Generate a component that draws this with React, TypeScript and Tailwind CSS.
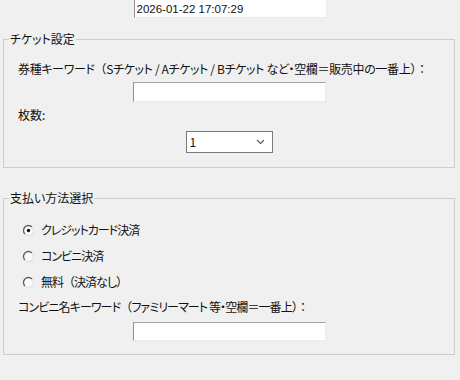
import React from 'react';

const font = "font-['Noto_Sans_CJK_JP','Noto_Sans',sans-serif] [font-feature-settings:'palt']";

// full-width punctuation keeps its full width like Meiryo UI
function W({ children }: { children: React.ReactNode }) {
  return <span className="[font-feature-settings:normal]">{children}</span>;
}

function TextBox({ value = '', className = '' }: { value?: string; className?: string }) {
  return (
    <div
      className={`mx-auto w-[193px] bg-white border-t border-l border-t-[#a3a3a3] border-l-[#8f8f8f] border-r border-b border-r-[#ececec] border-b-[#ececec] pl-[2px] leading-[18px] ${className}`}
    >
      {value}
    </div>
  );
}

function Radio({ checked }: { checked?: boolean }) {
  return (
    <svg width="13" height="13" viewBox="0 0 13 13" className="shrink-0">
      <circle cx="6.5" cy="6.5" r="5" fill="#fbfbfb" />
      <path d="M2.96 10.04 A5 5 0 0 1 10.04 2.96" fill="none" stroke="#5e5e5e" strokeWidth="1.3" />
      <path d="M10.04 2.96 A5 5 0 0 1 2.96 10.04" fill="none" stroke="#e2e2e2" strokeWidth="1.2" />
      {checked && <circle cx="6.5" cy="6.5" r="1.7" fill="#111111" />}
    </svg>
  );
}

function GroupBox({ title, className = '', children }: { title: string; className?: string; children: React.ReactNode }) {
  return (
    <fieldset className={`mx-[3px] w-[452px] border border-[#cdcdcd] px-[14px] ${className}`}>
      <legend className="ml-[-9px] px-[1px] leading-[16px]">{title}</legend>
      {children}
    </fieldset>
  );
}

export default function App() {
  return (
    <div className={`w-[460px] h-[380px] overflow-hidden bg-[#f0f0f0] text-[12px] text-[#111111] ${font}`}>
      <TextBox
        value="2026-01-22 17:07:29"
        className="h-[18px] border-t-0 leading-[16px] font-['Liberation_Sans',sans-serif] text-[11.5px]"
      />

      <GroupBox title="チケット設定" className="mt-[13px] pb-[14px]">
        <div className="mt-[14px] whitespace-nowrap leading-[16px] tracking-[-0.35px]">
          券種キーワード<W>（</W>Sチケット / Aチケット / Bチケット など・空欄＝販売中の一番上<W>）：</W>
        </div>
        <TextBox className="mt-[5px] h-[20px]" />
        <div className="mt-[5px] leading-[16px]">枚数:</div>
        <div className="mt-[8px] mx-auto flex h-[22px] w-[87px] items-center justify-between border border-[#7a7a7a] bg-white pl-[3px] pr-[7px]">
          <span>1</span>
          <svg width="9" height="6" viewBox="0 0 9 6">
            <path d="M1 1 L4.5 4.5 L8 1" fill="none" stroke="#5a5a5a" strokeWidth="1.1" />
          </svg>
        </div>
      </GroupBox>

      <GroupBox title="支払い方法選択" className="mt-[22px] pb-[13px]">
        <div className="mt-[16px] flex flex-col gap-[10px] pl-[4px] tracking-[-1px]">
          <label className="flex h-[16px] items-center gap-[6px]">
            <Radio checked />
            <span>クレジットカード決済</span>
          </label>
          <label className="flex h-[16px] items-center gap-[6px]">
            <Radio />
            <span>コンビニ決済</span>
          </label>
          <label className="flex h-[16px] items-center gap-[6px]">
            <Radio />
            <span>
              無料<W>（</W>決済なし<W>）</W>
            </span>
          </label>
        </div>
        <div className="mt-[9px] whitespace-nowrap leading-[16px] tracking-[-0.9px]">
          コンビニ名キーワード<W>（</W>ファミリーマート 等・空欄＝一番上<W>）：</W>
        </div>
        <TextBox className="mt-[7px] h-[19px]" />
      </GroupBox>
    </div>
  );
}
